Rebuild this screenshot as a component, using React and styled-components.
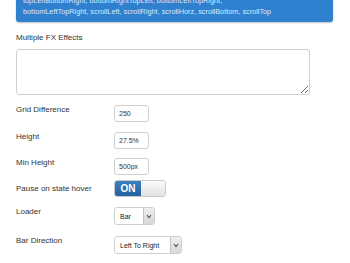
import React from "react";
import styled, { createGlobalStyle } from "styled-components";

const Global = createGlobalStyle`
  html, body { margin: 0; padding: 0; background: #fff; overflow: hidden; }
  body { font-family: "Liberation Sans", Arial, sans-serif; }
`;

const Page = styled.div`
  width: 350px;
  height: 263px;
  box-sizing: border-box;
  padding: 0 17px 0 16px;
  overflow: hidden;
`;

const Alert = styled.div`
  margin-top: -21px;
  padding: 5px 7px 5px 7px;
  background: #2f80cf;
  border-radius: 3px;
  box-shadow: 0 1px 2px rgba(0, 0, 0, 0.25);
  color: #dbe9f8;
  font-size: 7.3px;
  line-height: 11px;
  white-space: nowrap;
  overflow: hidden;
`;

const FieldLabel = styled.div`
  margin-top: 11px;
  font-size: 8px;
  line-height: 10px;
  color: #333;
`;

const TextArea = styled.textarea`
  display: block;
  box-sizing: border-box;
  width: 294px;
  height: 46px;
  margin-top: 6px;
  border: 1px solid #cfcfcf;
  border-radius: 3px;
  background: #fff;
  resize: vertical;
  font-family: inherit;
  font-size: 8px;
  outline: none;
`;

const Rows = styled.div`
  margin-top: 10px;
  display: flex;
  flex-direction: column;
`;

const Row = styled.div`
  display: flex;
  align-items: ${(p) => (p.$center ? "center" : "flex-start")};
  margin-top: ${(p) => p.$mt || 0}px;
`;

const Label = styled.div`
  width: 98px;
  flex: none;
  font-size: 8px;
  line-height: 10px;
  color: #333;
`;

const Input = styled.input`
  box-sizing: border-box;
  width: 35px;
  height: 17px;
  padding: 0 0 0 4px;
  border: 1px solid #cfcfcf;
  border-radius: 3px;
  font-family: inherit;
  font-size: 7px;
  color: #333;
  background: #fff;
  outline: none;
`;

const Toggle = styled.div`
  display: flex;
  width: 52px;
  height: 17px;
  border-radius: 3px;
  overflow: hidden;
  border: 1px solid #c9c9c9;
  box-sizing: border-box;
`;

const ToggleOn = styled.div`
  width: 26px;
  display: flex;
  align-items: center;
  justify-content: center;
  background: linear-gradient(#3a7fc4, #22629f);
  color: #fff;
  font-weight: bold;
  font-size: 10px;
`;

const ToggleOff = styled.div`
  flex: 1;
  background: linear-gradient(#fafafa, #e2e2e2);
`;

const Select = styled.div`
  display: flex;
  box-sizing: border-box;
  width: ${(p) => p.$w}px;
  height: 18px;
  border: 1px solid #cfcfcf;
  border-radius: 3px;
  background: #fff;
  overflow: hidden;
`;

const SelectValue = styled.div`
  flex: 1;
  padding-left: 5px;
  display: flex;
  align-items: center;
  font-size: 7px;
  color: #222;
`;

const SelectArrow = styled.div`
  width: 10px;
  flex: none;
  display: flex;
  align-items: center;
  justify-content: center;
  background: linear-gradient(#eeeeee, #d8d8d8);
  border-left: 1px solid #c4c4c4;
`;

const Chevron = () => (
  <svg width="6" height="5" viewBox="0 0 6 5">
    <path d="M1 1.2 L3 3.6 L5 1.2" fill="none" stroke="#555" strokeWidth="1.1" />
  </svg>
);

export default function App() {
  return (
    <>
      <Global />
      <Page>
        <Alert>
          slideUp, slideDown, slideLeft, slideRight, slideHorz, slideVert,
          <br />
          topLeftBottomRight, bottomRightTopLeft, bottomLeftTopRight,
          <br />
          bottomLeftTopRight, scrollLeft, scrollRight, scrollHorz, scrollBottom, scrollTop
        </Alert>
        <FieldLabel>Multiple FX Effects</FieldLabel>
        <TextArea />
        <Rows>
          <Row>
            <Label>Grid Difference</Label>
            <Input defaultValue="250" />
          </Row>
          <Row $mt={10}>
            <Label>Height</Label>
            <Input defaultValue="27.5%" />
          </Row>
          <Row $mt={9}>
            <Label>Min Height</Label>
            <Input defaultValue="500px" />
          </Row>
          <Row $mt={5} $center>
            <Label>Pause on state hover</Label>
            <Toggle>
              <ToggleOn>ON</ToggleOn>
              <ToggleOff />
            </Toggle>
          </Row>
          <Row $mt={10}>
            <Label>Loader</Label>
            <Select $w={41}>
              <SelectValue>Bar</SelectValue>
              <SelectArrow>
                <Chevron />
              </SelectArrow>
            </Select>
          </Row>
          <Row $mt={11}>
            <Label>Bar Direction</Label>
            <Select $w={68}>
              <SelectValue>Left To Right</SelectValue>
              <SelectArrow>
                <Chevron />
              </SelectArrow>
            </Select>
          </Row>
        </Rows>
      </Page>
    </>
  );
}
